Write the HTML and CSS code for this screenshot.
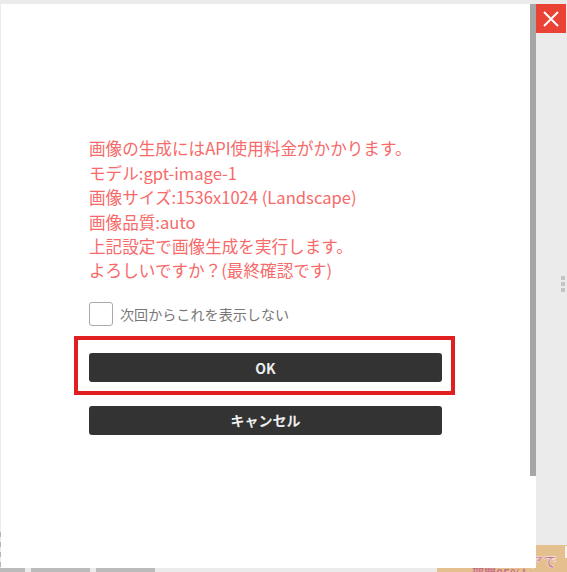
FILE: index.html
```html
<!DOCTYPE html>
<html lang="ja">
<head>
    <meta charset="UTF-8">
    <meta name="viewport" content="width=device-width, initial-scale=1.0">
    <title>画像生成の確認</title>
    <link rel="stylesheet" href="styles.css">
</head>
<body>

    <div class="page-bottom">
        <div class="tabs">
            <span class="tab tab-first"></span>
            <span class="tab"></span>
            <span class="tab"></span>
        </div>
        <div class="banner">
            <span class="banner-top">アで</span>
            <span class="banner-sub">部門85%!</span>
            <span class="banner-chip"></span>
        </div>
    </div>

    <div class="grip">
        <span></span>
        <span></span>
        <span></span>
    </div>

    <div class="grip-left">
        <span></span>
        <span></span>
        <span></span>
        <span></span>
    </div>

    <div class="modal">
        <div class="modal-body">
            <div class="message">
                <p>画像の生成にはAPI使用料金がかかります。</p>
                <p>モデル:gpt-image-1</p>
                <p>画像サイズ:1536x1024 (Landscape)</p>
                <p>画像品質:auto</p>
                <p>上記設定で画像生成を実行します。</p>
                <p>よろしいですか？(最終確認です)</p>
            </div>
            <label class="skip">
                <span class="skip-box"></span>
                <span>次回からこれを表示しない</span>
            </label>
            <div class="ok-wrap">
                <button class="btn">OK</button>
                <div class="ok-mark"></div>
            </div>
            <button class="btn btn-cancel">キャンセル</button>
        </div>
        <div class="scrollbar"></div>
    </div>

    <button class="close" aria-label="閉じる">
        <svg width="18" height="18" viewBox="0 0 18 18">
            <path d="M2 2 L16 16 M16 2 L2 16" stroke="#fff" stroke-width="2" fill="none"/>
        </svg>
    </button>

</body>
</html>
```

FILE: styles.css
```css
* {
    margin: 0;
    padding: 0;
    box-sizing: border-box;
    font-family: "Noto Sans CJK JP", "Noto Sans", sans-serif;
}
html, body {
    height: 100%;
    overflow: hidden;
}
body {
    position: relative;
    background: #ebebeb;
    display: flex;
    flex-direction: column;
    justify-content: flex-end;
}
.page-bottom {
    display: flex;
    justify-content: space-between;
    align-items: flex-end;
}
.tabs {
    display: flex;
    gap: 6px;
}
.tab {
    width: 59px;
    height: 4px;
    background: #bbbbbb;
}
.tab-first {
    width: 25px;
}
.banner {
    width: 130px;
    height: 27px;
    background: #e4c08f;
    position: relative;
    overflow: hidden;
}
.banner-top {
    position: absolute;
    left: 92px;
    top: 7px;
    font-size: 14px;
    line-height: 18px;
    font-weight: bold;
    color: #c9718a;
    -webkit-text-stroke: 0.4px #fff;
}
.banner-sub {
    position: absolute;
    left: 35px;
    top: 21px;
    font-size: 12px;
    line-height: 14px;
    font-weight: bold;
    color: #c9718a;
}
.banner-chip {
    position: absolute;
    right: 0;
    top: 1px;
    width: 2px;
    height: 12px;
    background: #f7f3ea;
}
.grip {
    position: absolute;
    left: 561px;
    top: 276px;
    display: flex;
    flex-direction: column;
    gap: 2px;
}
.grip span {
    width: 4px;
    height: 4px;
    background: #c4c4c4;
}
.grip-left {
    position: absolute;
    left: 0;
    top: 532px;
    display: flex;
    flex-direction: column;
    gap: 5px;
}
.grip-left span {
    width: 1px;
    height: 5px;
    background: #b5b5b5;
}
.modal {
    position: absolute;
    left: 1px;
    top: 4px;
    width: 535px;
    height: 564px;
    background: #fff;
    display: flex;
}
.modal-body {
    flex: 1;
    padding: 0 88px;
    display: flex;
    flex-direction: column;
    justify-content: center;
}
.message {
    color: #f66a6a;
    font-size: 16.6px;
    line-height: 24.4px;
    white-space: nowrap;
    margin-top: -1px;
}
.skip {
    display: flex;
    align-items: center;
    gap: 7px;
    margin-top: 19px;
    color: #777;
    font-size: 14.1px;
}
.skip-box {
    width: 24px;
    height: 24px;
    border: 1px solid #aaa;
    border-radius: 3px;
    background: #fff;
}
.ok-wrap {
    position: relative;
    margin-top: 27px;
}
.ok-mark {
    position: absolute;
    left: -15px;
    right: -13px;
    top: -17px;
    bottom: -13px;
    border: 4px solid #e02020;
    pointer-events: none;
}
.btn {
    display: block;
    width: 100%;
    height: 29px;
    padding-top: 1px;
    background: #333;
    color: #eee;
    border: none;
    border-radius: 3px;
    font-size: 14px;
    font-weight: bold;
}
.btn-cancel {
    margin-top: 24px;
    padding-top: 0;
}
.scrollbar {
    width: 6px;
    height: 472px;
    background: #a6a6a6;
}
.close {
    position: absolute;
    left: 536px;
    top: 4px;
    width: 30px;
    height: 29px;
    background: #ea4335;
    border: none;
    display: flex;
    align-items: center;
    justify-content: center;
}
```
